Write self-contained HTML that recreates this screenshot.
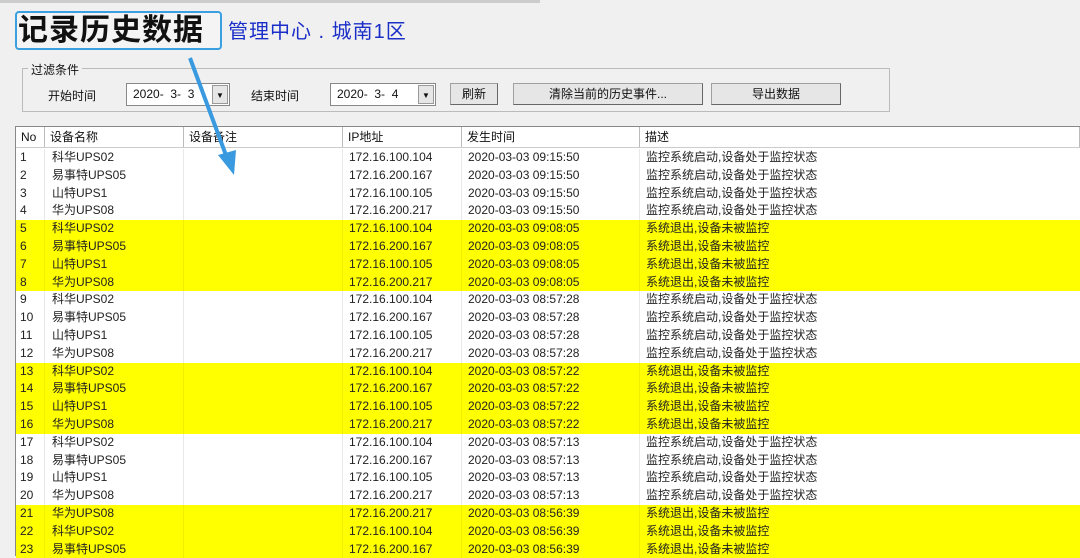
<!DOCTYPE html>
<html><head><meta charset="utf-8"><style>
*{margin:0;padding:0;box-sizing:border-box}
body{width:1080px;height:553px;overflow:hidden;background:#f0f0f0;font-family:"Liberation Sans","Noto Sans CJK SC",sans-serif;position:relative;font-size:12px;color:#111}
.a{position:absolute}
.btn{position:absolute;top:83px;height:22px;background:#e6e6e6;border:1px solid #a0a0a0;border-right-color:#666;border-bottom-color:#666;text-align:center;line-height:20px;font-size:12px}
.sel{position:absolute;top:83px;height:23px;background:#fff;border:1px solid #888;font-size:12px;line-height:21px;padding-left:6px}
.sel i{position:absolute;right:1px;top:1px;width:16px;height:19px;background:#e6e6e6;border:1px solid #999;font-style:normal;font-size:8px;text-align:center;line-height:19px}
.row{position:absolute;left:16px;width:1064px;height:17.8px;font-size:12px;line-height:17.8px;background:#fff;color:#222}
.row.y{background:#ffff00}
.row span{position:absolute;top:0;height:100%;border-right:1px solid #e8e8e8;padding-left:4px}
.row.y span{border-right-color:#f0f000}
.hd{position:absolute;top:127px;left:16px;width:1064px;height:21px;background:#fff;border-bottom:1px solid #ccc;font-size:12px;line-height:20px}
.hd span{position:absolute;top:0;height:100%;border-right:1px solid #bbb;padding-left:5px}
</style></head><body>
<div class="a" style="left:0;top:0;width:540px;height:3px;background:#ccc"></div>
<div class="a" style="left:15px;top:11px;width:207px;height:39px;border:2px solid #3aa0e0;border-radius:4px;background:#f4f4f4"></div>
<div class="a" style="left:18px;top:12px;font-size:30px;font-weight:bold;line-height:38px;color:#111;letter-spacing:1px">记录历史数据</div>
<div class="a" style="left:228px;top:18px;font-size:20px;line-height:28px;color:#1a2ec8;letter-spacing:1px">管理中心&nbsp;.&nbsp;城南1区</div>
<div class="a" style="left:22px;top:68px;width:868px;height:44px;border:1px solid #bbb"></div>
<div class="a" style="left:28px;top:61px;background:#f0f0f0;padding:0 3px;font-size:12px">过滤条件</div>
<div class="a" style="left:48px;top:87px">开始时间</div>
<div class="sel" style="left:126px;width:104px">2020-&nbsp; 3-&nbsp; 3<i>▼</i></div>
<div class="a" style="left:251px;top:87px">结束时间</div>
<div class="sel" style="left:330px;width:106px">2020-&nbsp; 3-&nbsp; 4<i>▼</i></div>
<div class="btn" style="left:450px;width:48px">刷新</div>
<div class="btn" style="left:513px;width:190px">清除当前的历史事件...</div>
<div class="btn" style="left:711px;width:130px">导出数据</div>
<div class="a" style="left:15px;top:126px;width:1065px;height:430px;border:1px solid #888;border-right:none;background:#fff"></div>
<div class="hd"><span style="left:0;width:29px">No</span><span style="left:29px;width:139px">设备名称</span><span style="left:168px;width:159px">设备备注</span><span style="left:327px;width:119px">IP地址</span><span style="left:446px;width:178px">发生时间</span><span style="left:624px;width:440px">描述</span></div>
<div id="rows"></div>
<svg class="a" style="left:0;top:0" width="1080" height="553"><line x1="190" y1="58" x2="227" y2="158" stroke="#3a9ae0" stroke-width="4"/><polygon points="218,155 236,150 234,175" fill="#3a9ae0"/></svg>
<script>
var n=["科华UPS02","易事特UPS05","山特UPS1","华为UPS08"],ip=["172.16.100.104","172.16.200.167","172.16.100.105","172.16.200.217"],t=["09:15:50","09:08:05","08:57:28","08:57:22","08:57:13","08:56:39"];
var h="";for(var i=1;i<=23;i++){var g=Math.floor((i-1)/4),k=(i-1)%4;if(i>=21)k=(k+3)%4;var y=(g==1||g==3||g==5);
h+='<div class="row'+(y?' y':'')+'" style="top:'+(149+(i-1)*17.8)+'px"><span style="left:0;width:29px">'+i+'</span><span style="left:29px;width:139px;padding-left:7px">'+n[k]+'</span><span style="left:168px;width:159px"></span><span style="left:327px;width:119px;padding-left:6px">'+ip[k]+'</span><span style="left:446px;width:178px;padding-left:6px">2020-03-03 '+t[g]+'</span><span style="left:624px;width:440px;padding-left:6px;border:none">'+(y?'系统退出,设备未被监控':'监控系统启动,设备处于监控状态')+'</span></div>';}
document.getElementById("rows").innerHTML=h;
</script>
</body></html>
